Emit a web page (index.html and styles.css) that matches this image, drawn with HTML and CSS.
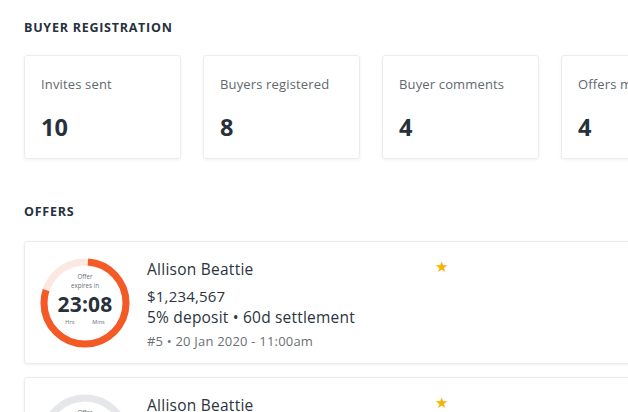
FILE: index.html
```html
<!DOCTYPE html>
<html>
<head>
<meta charset="utf-8">
<link rel="stylesheet" href="styles.css">
</head>
<body>
<main class="page">
  <h2 class="section-title">BUYER REGISTRATION</h2>
  <div class="stats">
    <div class="stat"><div class="stat-label">Invites sent</div><div class="stat-value">10</div></div>
    <div class="stat"><div class="stat-label">Buyers registered</div><div class="stat-value">8</div></div>
    <div class="stat"><div class="stat-label">Buyer comments</div><div class="stat-value">4</div></div>
    <div class="stat"><div class="stat-label">Offers made</div><div class="stat-value">4</div></div>
  </div>

  <h2 class="section-title offers-title">OFFERS</h2>
  <div class="offers">
    <div class="offer">
      <div class="timer">
        <svg class="ring" viewBox="0 0 90 90" width="90" height="90">
          <circle cx="45" cy="45" r="41" fill="none" stroke="#fbe8e1" stroke-width="7"/>
          <circle cx="45" cy="45" r="41" fill="none" stroke="#f45a25" stroke-width="7"
            stroke-dasharray="203 300" stroke-dashoffset="-3" transform="rotate(-90 45 45)"/>
        </svg>
        <div class="timer-text">
          <div class="timer-cap">Offer<br>expires in</div>
          <div class="timer-time">23:08</div>
          <div class="timer-units"><span>Hrs</span><span>Mins</span></div>
        </div>
      </div>
      <div class="offer-info">
        <div class="offer-name">Allison Beattie</div>
        <div class="offer-price">$1,234,567</div>
        <div class="offer-terms">5% deposit • 60d settlement</div>
        <div class="offer-meta">#5 • 20 Jan 2020 - 11:00am</div>
      </div>
      <div class="star">★</div>
    </div>
    <div class="offer">
      <div class="timer">
        <svg class="ring" viewBox="0 0 90 90" width="90" height="90">
          <circle cx="45" cy="45" r="41" fill="none" stroke="#e6e7ea" stroke-width="7"/>
        </svg>
        <div class="timer-text">
          <div class="timer-cap">Offer<br>expires in</div>
          <div class="timer-time">23:08</div>
          <div class="timer-units"><span>Hrs</span><span>Mins</span></div>
        </div>
      </div>
      <div class="offer-info">
        <div class="offer-name">Allison Beattie</div>
        <div class="offer-price">$1,234,567</div>
        <div class="offer-terms">5% deposit • 60d settlement</div>
        <div class="offer-meta">#5 • 20 Jan 2020 - 11:00am</div>
      </div>
      <div class="star">★</div>
    </div>
  </div>
</main>
</body>
</html>
```

FILE: styles.css
```css
html, body {
  margin: 0;
  padding: 0;
  background: #fff;
  overflow: hidden;
}
body {
  font-family: "Open Sans", "Lato", sans-serif;
  color: #2b3540;
  width: 628px;
  height: 412px;
}
.page {
  padding: 20px 0 0 24px;
}
.section-title {
  margin: 0;
  font-size: 12.5px;
  font-weight: 700;
  letter-spacing: 0.75px;
  color: #26313c;
  line-height: 16px;
}
.stats {
  display: flex;
  gap: 22px;
  margin-top: 19px;
  width: 800px;
}
.stat {
  flex: 0 0 157px;
  height: 104px;
  box-sizing: border-box;
  border: 1px solid #ececec;
  border-radius: 3px;
  box-shadow: 0 1px 3px rgba(0,0,0,0.06);
  padding: 19px 0 0 16px;
}
.stat-label {
  font-size: 13px;
  letter-spacing: 0.15px;
  color: #62686e;
  line-height: 18px;
}
.stat-value {
  margin-top: 19px;
  font-size: 23.5px;
  font-weight: 700;
  color: #26313c;
  line-height: 30px;
}
.offers-title {
  margin-top: 45px;
}
.offers {
  margin-top: 21px;
  display: flex;
  flex-direction: column;
  gap: 13px;
  width: 700px;
}
.offer {
  display: flex;
  align-items: flex-start;
  height: 123px;
  box-sizing: border-box;
  border: 1px solid #ececec;
  border-radius: 3px;
  box-shadow: 0 1px 3px rgba(0,0,0,0.06);
  padding: 16px 0 0 15px;
}
.timer {
  position: relative;
  width: 90px;
  height: 90px;
  flex: 0 0 90px;
}
.ring {
  display: block;
}
.timer-text {
  position: absolute;
  inset: 0;
  display: flex;
  flex-direction: column;
  align-items: center;
  padding-top: 15px;
  box-sizing: border-box;
}
.timer-cap {
  font-size: 6.2px;
  line-height: 8.5px;
  color: #6b7075;
  text-align: center;
}
.timer-time {
  font-size: 21px;
  font-weight: 700;
  line-height: 28px;
  color: #26313c;
  letter-spacing: 0.2px;
}
.timer-units {
  display: flex;
  gap: 18px;
  font-size: 5.5px;
  color: #6b7075;
  line-height: 8px;
}
.offer-info {
  margin-left: 17px;
  width: 288px;
  padding-top: 1px;
}
.offer-name {
  font-size: 15.5px;
  letter-spacing: 0.25px;
  line-height: 20px;
  color: #2b3540;
}
.offer-price {
  margin-top: 7px;
  font-size: 15px;
  letter-spacing: 0.2px;
  line-height: 20px;
  color: #2b3540;
}
.offer-terms {
  font-size: 15.5px;
  letter-spacing: 0.2px;
  line-height: 22px;
  color: #2b3540;
}
.offer-meta {
  margin-top: 4px;
  font-size: 13px;
  letter-spacing: 0.2px;
  line-height: 18px;
  color: #6b7075;
}
.star {
  font-size: 15px;
  color: #f6b400;
  line-height: 16px;
  padding-top: 0;
}
```
